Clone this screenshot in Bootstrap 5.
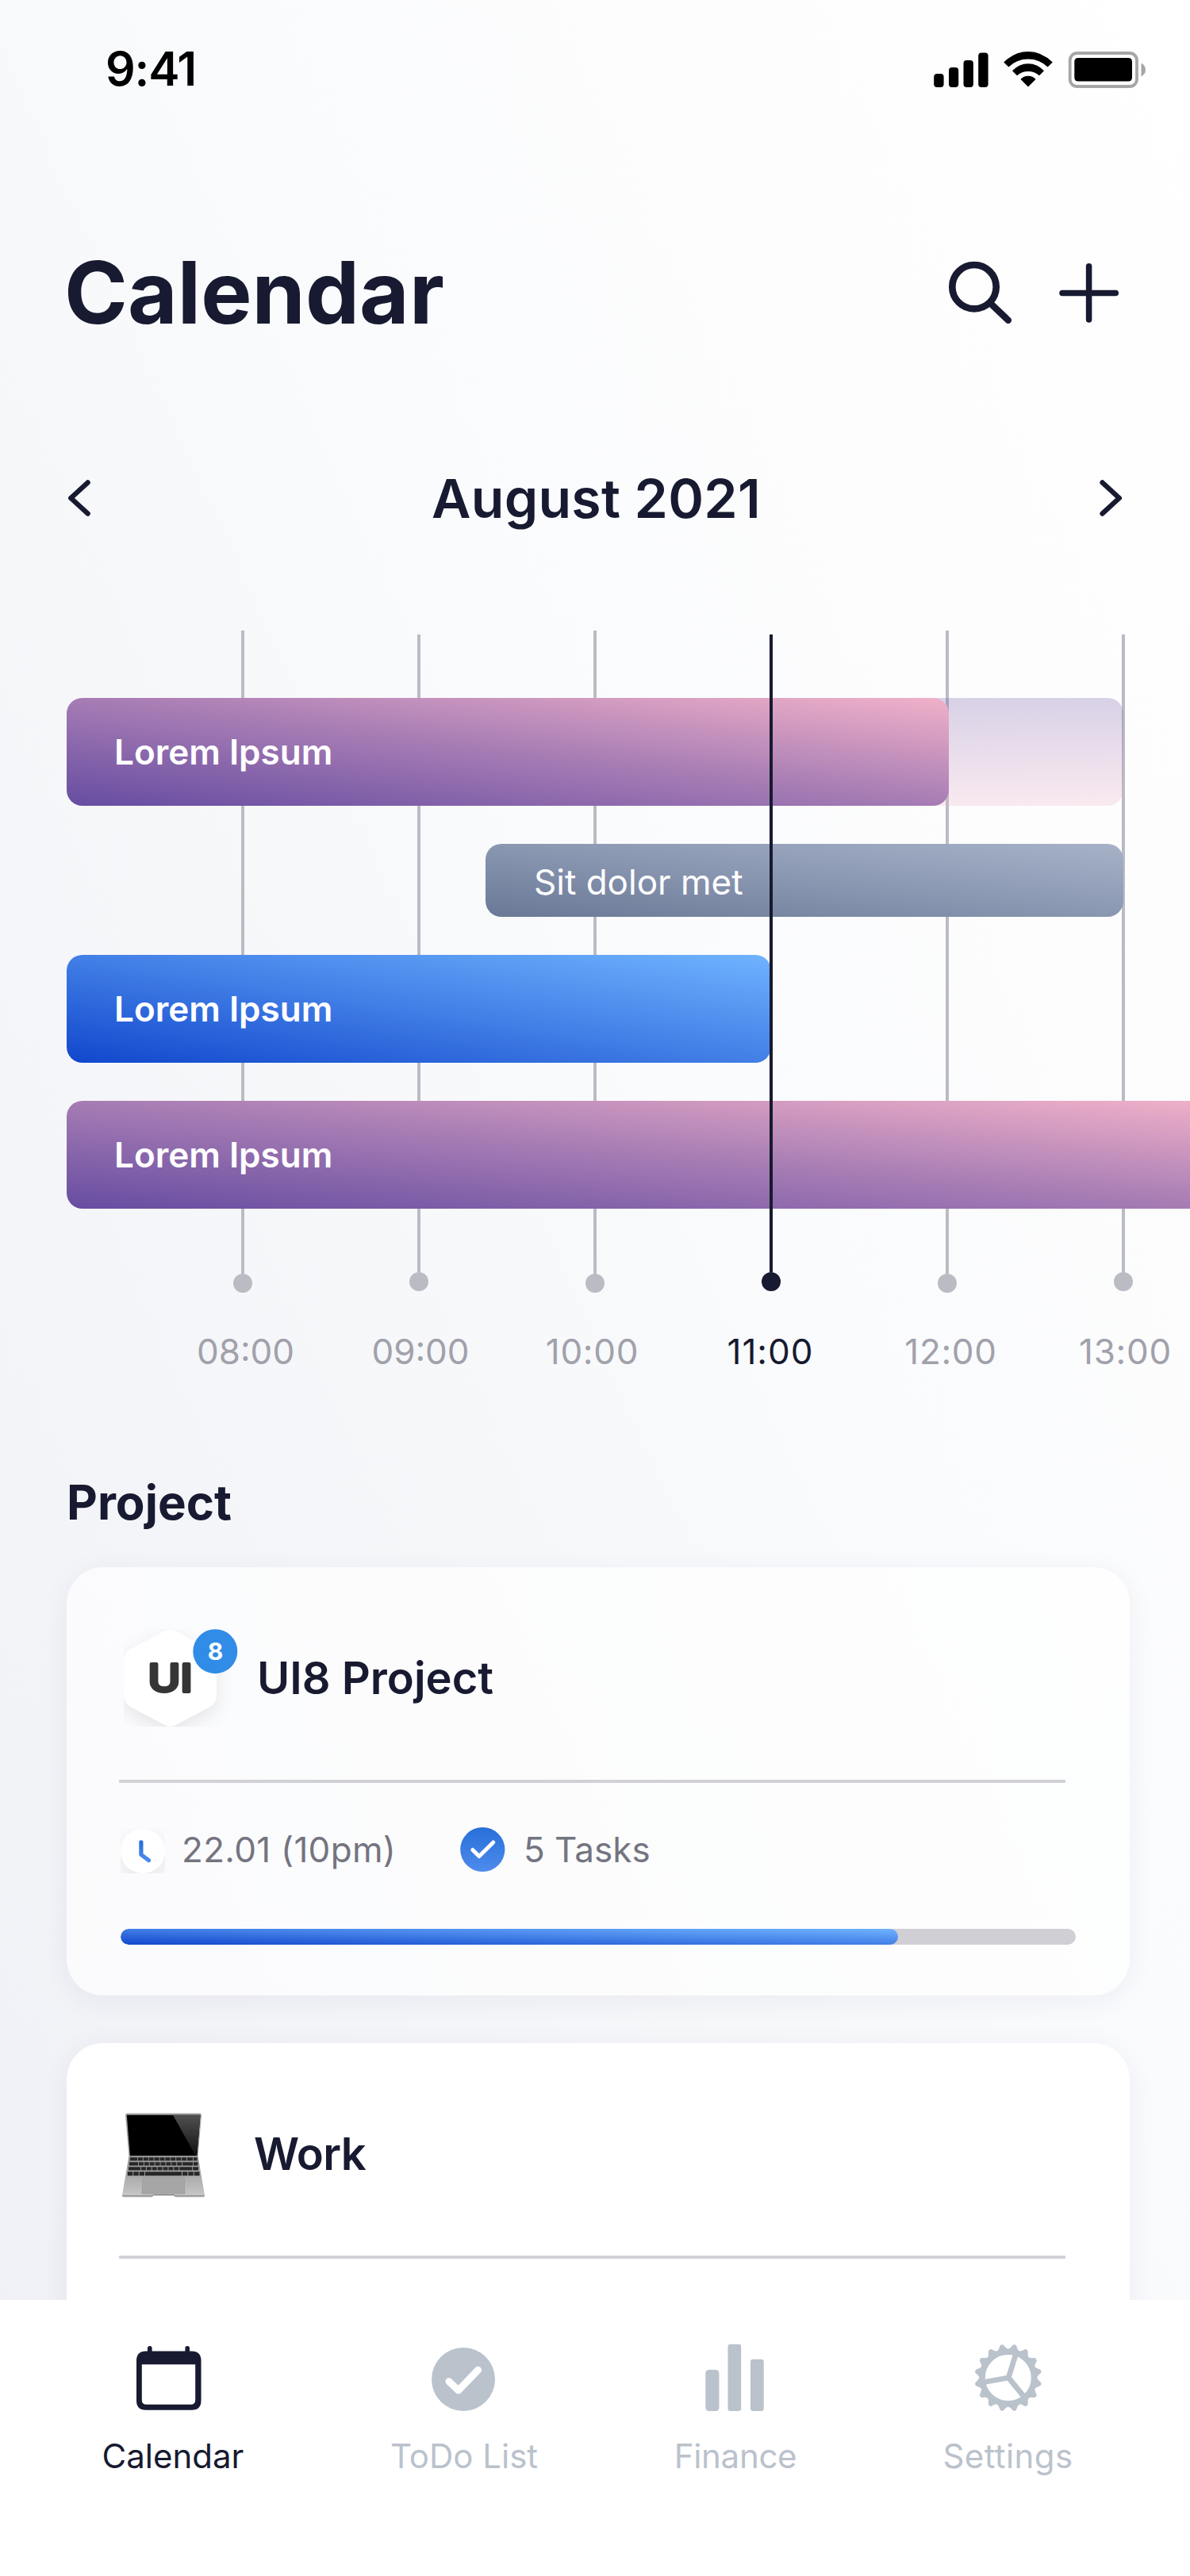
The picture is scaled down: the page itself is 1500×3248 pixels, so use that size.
<!DOCTYPE html>
<html lang="en">
<head>
<meta charset="utf-8">
<meta name="viewport" content="width=device-width, initial-scale=1">
<title>Calendar</title>
<link href="https://cdn.jsdelivr.net/npm/bootstrap@5.3.0/dist/css/bootstrap.min.css" rel="stylesheet">
<style>
  :root { --ink: #171a30; --muted: #bac2cc; --rail: #bbbbc4; }
  body { font-family: Inter, "Liberation Sans", sans-serif; color: var(--ink); line-height: 1; background: #fff; }
  svg { display: block; flex: none; overflow: visible; }
  .phone { width: 1500px; height: 3248px; }
  .screen { height: 2900px; background: linear-gradient(to top right, #eff0f6 0%, #f7f8fa 44%, #fafbfd 60%, #fdfdfd 80%, #fff 100%) 0 0 / 1500px 3248px; }

  .status-bar { height: 176px; padding: 0 56px 0 133px; }
  .clock-text { font-size: 59px; font-weight: 600; letter-spacing: -1.2px; padding-bottom: 3px; color: #000; }
  .page-head { height: 386px; padding: 0 90px 0 81px; }
  .page-head h1 { font-size: 108px; font-weight: 700; line-height: 1; letter-spacing: .1px; }
  .month-nav { height: 132px; padding: 0 84px; }
  .month-nav h2 { font-size: 68px; font-weight: 600; line-height: 1; letter-spacing: .25px; padding-left: 3px; }
  .page-head button, .month-nav button { color: var(--ink); }

  .chart { display: grid; margin-top: 101px; overflow: hidden; }
  .chart > * { grid-area: 1 / 1; }
  .ticks { padding-left: 195px; }
  .tick { width: 222px; flex: none; color: var(--rail); }
  .tick .rail { width: 4px; height: 811px; background: currentColor; }
  .tick .knob { width: 24px; height: 24px; background: currentColor; margin-bottom: 44px; }
  .tick:nth-child(even) { padding-top: 5px; }
  .tick:nth-child(even) .rail { height: 804px; }
  .tick:nth-child(even) .knob { margin-bottom: 46px; }
  .tick time { font-size: 44px; line-height: 60px; color: #a1a1ab; }
  .tick.now { color: var(--ink); position: relative; z-index: 2; }
  .tick.now time { color: var(--ink); letter-spacing: 1px; padding-right: 2px; }
  .t08 time { padding-left: 7px; } .t09 time { padding-left: 4px; }
  .t10 time, .t12 time, .t13 time { letter-spacing: .7px; }
  .t10 time { padding-right: 7px; } .t12 time { padding-left: 9px; } .t13 time { padding-left: 5px; }

  .tracks { padding: 85px 0 0 84px; gap: 48px; z-index: 1; }
  .event { height: 136px; border-radius: 20px; padding-left: 60px; color: #fff; font-size: 44px; font-weight: 600; }
  .event-rose { background: linear-gradient(to top right, #664ca1 0%, #a67cb4 50%, #f1b1c9 100%); }
  .event-blue { background: linear-gradient(to top right, #1147cd 0%, #427fe6 50%, #6fb3ff 100%); }
  .event-slate { background: linear-gradient(to top right, #6a7896 0%, #8a97b1 50%, #a7b2c8 100%); height: 92px; padding-left: 61px; padding-top: 3px; margin-left: 528px; font-weight: 400; }
  .event-rest { width: 1332px; border-radius: 20px; background: linear-gradient(rgba(105,79,163,.25), rgba(239,176,201,.25)); }
  .w-5h { width: 1112px; } .w-slate { width: 804px; } .w-4h { width: 888px; } .w-open { width: 1456px; border-radius: 20px 0 0 20px; }

  .section-title { font-size: 60px; font-weight: 700; line-height: 60px; margin: 130px 0 52px 84px; }
  .project { height: 540px; width: 1340px; margin: 0 0 60px 84px; border: 0; border-radius: 46px; background: #fff; box-shadow: 0 6px 36px rgba(35,35,85,.055); padding-left: 66px; }
  .project-soft { background: rgba(255,255,255,.66); }
  .project-head { height: 268px; padding-top: 11px; font-size: 56px; font-weight: 600; }
  .project-head h4 { font: inherit; }
  .title-tight { letter-spacing: -.6px; }
  .rule { width: 1193px; height: 4px; background: #d1d1d7; border-radius: 1px; }
  .meta { height: 168px; color: #74747f; font-size: 44px; }
  .meta-time { width: 345px; letter-spacing: .3px; }
  .meter { width: 1204px; height: 20px; border-radius: 10px; background: #d0cfd5; margin: 16px 0 0 2px; }
  .meter .progress-bar { border-radius: 10px; background: linear-gradient(to top right, #1147cd 0%, #427fe6 50%, #6fb3ff 100%); }

  .tab-bar { height: 348px; padding: 48px 0 0 107px; background: #fff; }
  .tab-bar a { flex: none; color: var(--muted); font-size: 42px; text-decoration: none; line-height: 50px; }
  .tab-bar a svg { margin-bottom: 18px; }
  .tab-bar a.active { color: var(--ink); }
  .tab-a { width: 222px; } .tab-b { width: 512px; } .tab-c { width: 172px; letter-spacing: -.3px; } .tab-d { width: 515px; letter-spacing: .4px; }
</style>
<script src="https://cdn.jsdelivr.net/npm/bootstrap@5.3.0/dist/js/bootstrap.bundle.min.js"></script>
</head>
<body>
<div class="phone overflow-hidden">
  <main class="screen overflow-hidden">
    <div class="status-bar d-flex justify-content-between align-items-center">
      <span class="clock-text">9:41</span>
      <svg width="268" height="48" viewBox="1176 64 268 48" aria-hidden="true">
        <rect x="1177.2" y="93" width="12.4" height="17" rx="4"/>
        <rect x="1196" y="85" width="12.2" height="25" rx="4"/>
        <rect x="1214.5" y="76" width="12.4" height="34" rx="4"/>
        <rect x="1233.2" y="66.5" width="12.4" height="43.5" rx="4"/>
        <path d="M1265.2 78.6Q1279 65 1296 65Q1313 65 1326.8 78.6L1320.6 84.5Q1310 74.6 1296 74.6Q1282 74.6 1271.4 84.5Z"/>
        <path d="M1276 89.3Q1284.5 80.2 1296 80.2Q1307.5 80.2 1316 89.3L1310 95.3Q1304 90 1296 90Q1288 90 1282 95.3Z"/>
        <path d="M1286.5 100Q1290 95.7 1296 95.7Q1302 95.7 1305.5 100L1296 109.4Z"/>
        <rect x="1348.7" y="67" width="84.3" height="42" rx="9" fill="none" stroke="#a6a6a6" stroke-width="3.8"/>
        <rect x="1354.3" y="73" width="72.7" height="29.6" rx="4.5"/>
        <path d="M1438.5 79.5Q1444 82.5 1444 88Q1444 93.5 1438.5 96.5Z" fill="#a6a6a6"/>
      </svg>
    </div>

    <header class="page-head d-flex justify-content-between align-items-center">
      <h1 class="m-0">Calendar</h1>
      <div class="d-flex align-items-center">
        <button class="btn p-0 border-0" aria-label="Search">
          <svg width="130" height="80" viewBox="1195 329 130 80" fill="none" stroke="currentColor">
            <circle cx="1228" cy="361.7" r="27.7" stroke-width="8.7"/><path d="M1248.5 382.5L1270.8 403.8" stroke-width="8.5" stroke-linecap="round"/>
          </svg>
        </button>
        <button class="btn p-0 border-0" aria-label="Add">
          <svg width="85" height="80" viewBox="1325 329 85 80" fill="none" stroke="currentColor" stroke-width="7.5" stroke-linecap="round"><path d="M1372.6 335.7V403M1339 369.4H1406.3"/></svg>
        </button>
      </div>
    </header>

    <nav class="month-nav d-flex justify-content-between align-items-center">
      <button class="btn p-0 border-0" aria-label="Previous month"><svg width="30" height="48" viewBox="84 604 30 48" fill="none" stroke="currentColor" stroke-width="6.4" stroke-linecap="round" stroke-linejoin="round"><path d="M110.6 608.5L89.3 628L110.6 647.5"/></svg></button>
      <h2 class="m-0">August 2021</h2>
      <button class="btn p-0 border-0" aria-label="Next month"><svg width="30" height="48" viewBox="1386 604 30 48" fill="none" stroke="currentColor" stroke-width="6.4" stroke-linecap="round" stroke-linejoin="round"><path d="M1389.6 608.5L1410.8 628L1389.6 647.5"/></svg></button>
    </nav>

    <section class="chart">
      <div class="ticks d-flex">
        <div class="tick t08 d-flex flex-column align-items-center"><span class="rail"></span><span class="knob rounded-circle"></span><time>08:00</time></div>
        <div class="tick t09 d-flex flex-column align-items-center"><span class="rail"></span><span class="knob rounded-circle"></span><time>09:00</time></div>
        <div class="tick t10 d-flex flex-column align-items-center"><span class="rail"></span><span class="knob rounded-circle"></span><time>10:00</time></div>
        <div class="tick now d-flex flex-column align-items-center"><span class="rail"></span><span class="knob rounded-circle"></span><time>11:00</time></div>
        <div class="tick t12 d-flex flex-column align-items-center"><span class="rail"></span><span class="knob rounded-circle"></span><time>12:00</time></div>
        <div class="tick t13 d-flex flex-column align-items-center"><span class="rail"></span><span class="knob rounded-circle"></span><time>13:00</time></div>
      </div>
      <div class="tracks d-flex flex-column">
        <div class="event-rest"><div class="event event-rose w-5h d-flex align-items-center">Lorem Ipsum</div></div>
        <div class="event event-slate w-slate d-flex align-items-center">Sit dolor met</div>
        <div class="event event-blue w-4h d-flex align-items-center">Lorem Ipsum</div>
        <div class="event event-rose w-open d-flex align-items-center">Lorem Ipsum</div>
      </div>
    </section>

    <h3 class="section-title">Project</h3>

    <article class="card project project-soft">
      <div class="project-head d-flex align-items-center">
        <svg width="174" height="124" viewBox="150 2053 174 124">
          <defs>
            <filter id="soft" x="-40%" y="-40%" width="180%" height="180%"><feDropShadow dx="0" dy="8" stdDeviation="11" flood-color="#000" flood-opacity=".09"/></filter>
            <clipPath id="tile"><rect x="156" y="2053" width="140" height="123"/></clipPath>
          </defs>
          <g clip-path="url(#tile)">
            <path filter="url(#soft)" fill="#fff" d="M208 2055.6Q214.5 2052.6 221 2055.6L262.5 2077.5Q273 2083.5 273 2094V2136Q273 2146 263.5 2151.5L221 2174Q214.5 2177 208 2174L165.5 2151.5Q156 2146 156 2136V2094Q156 2083.5 166 2077.5Z"/>
          </g>
          <text x="186.5" y="2132.3" font-family="Inter, sans-serif" font-size="48" font-weight="500" fill="#353535" stroke="#353535" stroke-width="4" stroke-linejoin="round" textLength="56" lengthAdjust="spacingAndGlyphs">UI</text>
          <circle cx="271.3" cy="2081.2" r="28" fill="#318ce7"/>
          <text x="271.5" y="2092.2" text-anchor="middle" font-family="Inter, sans-serif" font-size="30" font-weight="700" fill="#fff">8</text>
        </svg>
        <h4 class="m-0">UI8 Project</h4>
      </div>
      <div class="rule"></div>
      <div class="meta d-flex align-items-center">
        <svg width="79" height="60" viewBox="150 2302 79 60">
          <defs>
            <linearGradient id="hand" x1="0" y1="0" x2="0" y2="1"><stop stop-color="#276fd9"/><stop offset="1" stop-color="#4f8bec"/></linearGradient>
            <clipPath id="face"><rect x="152" y="2306" width="56" height="56"/></clipPath>
          </defs>
          <g clip-path="url(#face)"><circle cx="180" cy="2334" r="28" fill="#fff" filter="url(#soft)"/></g>
          <path d="M177.9 2322.8V2338.5L187.5 2345.6" fill="none" stroke="url(#hand)" stroke-width="5.2" stroke-linecap="round" stroke-linejoin="round"/>
        </svg>
        <span class="meta-time">22.01 (10pm)</span>
        <svg width="86" height="60" viewBox="574 2302 86 60">
          <circle cx="608.3" cy="2332" r="28.1" fill="url(#hand)"/>
          <path d="M595.8 2332.5L604 2340.5L621.8 2323" fill="none" stroke="#fff" stroke-width="5" stroke-linecap="round" stroke-linejoin="round"/>
        </svg>
        <span>5 Tasks</span>
      </div>
      <div class="progress meter"><div class="progress-bar" style="width:81.4%"></div></div>
    </article>

    <article class="card project">
      <div class="project-head d-flex align-items-center">
        <svg width="170" height="112" viewBox="150 2660 170 112">
          <defs>
            <linearGradient id="glare" x1="0" y1="0" x2="0" y2="1"><stop stop-color="#505050"/><stop offset="1" stop-color="#111"/></linearGradient>
            <linearGradient id="deck" x1="0" y1="0" x2="0" y2="1"><stop stop-color="#8e8e8e"/><stop offset="1" stop-color="#c9c9c9"/></linearGradient>
          </defs>
          <path d="M160 2664.5H252Q254 2664.5 254 2667L249.5 2719H162.5L158 2667Q158 2664.5 160 2664.5Z" fill="#a5a5a5"/>
          <path d="M159.8 2666.8H252.5L248.3 2718H163.8Z" fill="#000"/>
          <path d="M218 2666.8H252.5L248.3 2718H246.5Z" fill="url(#glare)"/>
          <path d="M162.5 2718.5H249.5L258 2767.5Q258 2770.5 256 2770.5H221L219 2768.5H193.5L191.5 2770.5H156Q154 2770.5 154 2767.5Z" fill="url(#deck)"/>
          <path d="M154.3 2768.8H192L193.5 2767.5H219L221 2768.8H257.7" fill="none" stroke="#777" stroke-width="1"/>
          <g stroke="#272727" fill="none">
            <path d="M164 2722.3H248.5" stroke-width="4" stroke-dasharray="9 .9 6 .9 6 .9 6 .9 6 .9 6 .9 6 .9 6 .9 6 .9 6 .9 7 .9"/>
            <path d="M163 2728.3H249.5" stroke-width="4.2" stroke-dasharray="11 .9 6 .9 6 .9 6 .9 6 .9 6 .9 6 .9 6 .9 6 .9 13 .9"/>
            <path d="M162 2734.4H250" stroke-width="4.2" stroke-dasharray="15 .9 6 .9 6 .9 6 .9 6 .9 6 .9 6 .9 6 .9 16 .9"/>
            <path d="M160.8 2740.7H251.5" stroke-width="5" stroke-dasharray="6.5 .9 6.5 .9 6.5 .9 46 .9 6.5 .9 6.5 .9 8 .9"/>
          </g>
          <path d="M180 2745H232.3L233 2766H179Z" fill="#a6a6a6" stroke="#979797" stroke-width=".6"/>
        </svg>
        <h4 class="m-0 title-tight">Work</h4>
      </div>
      <div class="rule"></div>
    </article>
  </main>

  <nav class="tab-bar d-flex align-items-start">
    <a href="#" class="tab-a active d-flex flex-column align-items-center">
      <svg width="96" height="106" viewBox="170 2948 96 106" fill="currentColor">
        <path fill-rule="evenodd" d="M184 2964.5H241.5Q253.5 2964.5 253.5 2976.5V3027Q253.5 3038.8 241.5 3038.8H184Q172 3038.8 172 3027V2976.5Q172 2964.5 184 2964.5ZM178.8 2981.3V3026Q178.8 3031.8 184.5 3031.8H240.5Q246.2 3031.8 246.2 3026V2981.3Z"/>
        <path d="M188.8 2960.8V2968M236.2 2960.8V2968" stroke="currentColor" stroke-width="5.6" stroke-linecap="round"/>
      </svg>
      Calendar
    </a>
    <a href="#" class="tab-b d-flex flex-column align-items-center">
      <svg width="84" height="106" viewBox="543 2948 84 106">
        <circle cx="584" cy="3000" r="40" fill="currentColor"/>
        <path d="M566 3002.7L577.8 3014L602.5 2988.3" fill="none" stroke="#fff" stroke-width="9" stroke-linecap="round" stroke-linejoin="round"/>
      </svg>
      ToDo List
    </a>
    <a href="#" class="tab-c d-flex flex-column align-items-center">
      <svg width="76" height="106" viewBox="889 2948 76 106" fill="currentColor">
        <rect x="889.3" y="2988" width="17.2" height="52" rx="4.5"/><rect x="917.5" y="2955.7" width="16.7" height="84.3" rx="3"/><rect x="946" y="2974.8" width="16.7" height="65.2" rx="3"/>
      </svg>
      Finance
    </a>
    <a href="#" class="tab-d d-flex flex-column align-items-center">
      <svg width="86" height="106" viewBox="1227.5 2948 86 106">
        <defs><path id="cog" d="M-8 -33L-6.8 -36Q-5 -36.5 -3.2 -40Q-2.4 -42.5 0 -42.5Q2.4 -42.5 3.2 -40Q5 -36.5 6.8 -36L8 -33Z"/></defs>
        <g transform="translate(1270.3 2998) rotate(11.25)" fill="currentColor">
          <use href="#cog"/><use href="#cog" transform="rotate(22.5)"/><use href="#cog" transform="rotate(45)"/><use href="#cog" transform="rotate(67.5)"/>
          <use href="#cog" transform="rotate(90)"/><use href="#cog" transform="rotate(112.5)"/><use href="#cog" transform="rotate(135)"/><use href="#cog" transform="rotate(157.5)"/>
          <use href="#cog" transform="rotate(180)"/><use href="#cog" transform="rotate(202.5)"/><use href="#cog" transform="rotate(225)"/><use href="#cog" transform="rotate(247.5)"/>
          <use href="#cog" transform="rotate(270)"/><use href="#cog" transform="rotate(292.5)"/><use href="#cog" transform="rotate(315)"/><use href="#cog" transform="rotate(337.5)"/>
        </g>
        <circle cx="1270.3" cy="2998" r="32.3" fill="none" stroke="currentColor" stroke-width="6.6"/>
        <path d="M1280 2968L1270.7 2998L1240 3003.5M1270.7 2998L1290 3021.5" fill="none" stroke="currentColor" stroke-width="6.8"/>
      </svg>
      Settings
    </a>
  </nav>
</div>
</body>
</html>
